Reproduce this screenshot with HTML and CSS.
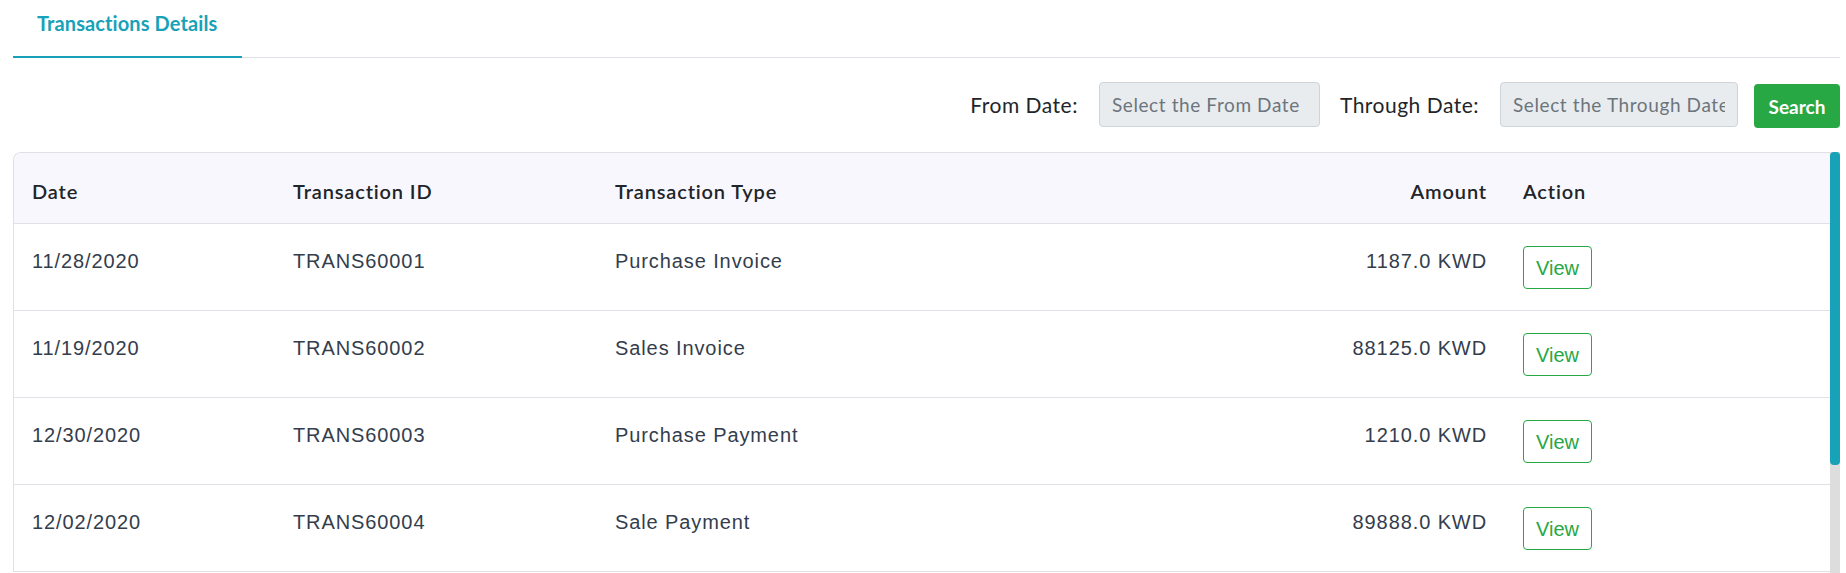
FILE: index.html
```html
<!DOCTYPE html>
<html lang="en">
<head>
<meta charset="utf-8">
<title>Transactions Details</title>
<link rel="stylesheet" href="styles.css">
</head>
<body>
<div class="page">
  <nav class="tabs">
    <a class="tab tab-active" href="#">Transactions Details</a>
  </nav>

  <form class="filters">
    <label class="filter-label" for="from-date">From Date:</label>
    <input class="filter-input filter-from" id="from-date" type="text" placeholder="Select the From Date">
    <label class="filter-label" for="through-date">Through Date:</label>
    <input class="filter-input filter-through" id="through-date" type="text" placeholder="Select the Through Date">
    <button class="btn-search" type="button">Search</button>
  </form>

  <div class="table-card">
    <div class="table-scroll">
      <table class="tx-table">
        <colgroup>
          <col class="col-date">
          <col class="col-id">
          <col class="col-type">
          <col class="col-amount">
          <col class="col-action">
        </colgroup>
        <thead>
          <tr>
            <th>Date</th>
            <th>Transaction ID</th>
            <th>Transaction Type</th>
            <th class="num">Amount</th>
            <th>Action</th>
          </tr>
        </thead>
        <tbody>
          <tr>
            <td>11/28/2020</td>
            <td>TRANS60001</td>
            <td>Purchase Invoice</td>
            <td class="num">1187.0 KWD</td>
            <td><button class="btn-view" type="button">View</button></td>
          </tr>
          <tr>
            <td>11/19/2020</td>
            <td>TRANS60002</td>
            <td>Sales Invoice</td>
            <td class="num">88125.0 KWD</td>
            <td><button class="btn-view" type="button">View</button></td>
          </tr>
          <tr>
            <td>12/30/2020</td>
            <td>TRANS60003</td>
            <td>Purchase Payment</td>
            <td class="num">1210.0 KWD</td>
            <td><button class="btn-view" type="button">View</button></td>
          </tr>
          <tr>
            <td>12/02/2020</td>
            <td>TRANS60004</td>
            <td>Sale Payment</td>
            <td class="num">89888.0 KWD</td>
            <td><button class="btn-view" type="button">View</button></td>
          </tr>
        </tbody>
      </table>
    </div>
    <div class="scrollbar">
      <div class="scrollbar-thumb"></div>
    </div>
  </div>
</div>
</body>
</html>
```

FILE: styles.css
```css
html, body {
  margin: 0;
  padding: 0;
  overflow: hidden;
  background: #ffffff;
}

body {
  font-family: Lato, "Open Sans", sans-serif;
  color: #212529;
}

.page {
  padding: 0 6px 0 13px;
}

/* Tab strip */
.tabs {
  display: flex;
  height: 57px;
  border-bottom: 1px solid #dee2e6;
}

.tab {
  display: block;
  box-sizing: border-box;
  height: 58px;
  padding: 11px 25px 0 24px;
  margin-bottom: -1px;
  font-size: 20px;
  line-height: 24px;
  letter-spacing: 0.1px;
  font-weight: 700;
  color: #17a2b8;
  text-decoration: none;
}

.tab-active {
  border-bottom: 2px solid #17a2b8;
}

/* Date filter row */
.filters {
  display: flex;
  justify-content: flex-end;
  align-items: center;
  margin: 24px 0 0;
  height: 45px;
}

.filter-label {
  font-size: 21px;
  letter-spacing: 0.5px;
  color: #212529;
  margin-right: 21px;
}

.filter-input {
  box-sizing: border-box;
  height: 45px;
  padding: 0 12px;
  border: 1px solid #ced4da;
  border-radius: 4px;
  background: #e9ecef;
  font-family: Lato, sans-serif;
  font-size: 19px;
  letter-spacing: 0.6px;
  color: #495057;
  margin-right: 20px;
}

.filter-input::placeholder {
  color: #6c757d;
}

.filter-from {
  width: 221px;
}

.filter-through {
  width: 238px;
  margin-right: 16px;
}

.btn-search {
  box-sizing: border-box;
  height: 44px;
  width: 86px;
  margin-top: 3px;
  border: none;
  border-radius: 4px;
  background: #28a745;
  color: #ffffff;
  font-family: Lato, sans-serif;
  font-size: 19px;
  font-weight: 700;
}

/* Transactions table with its scroll track */
.table-card {
  display: flex;
  margin-top: 25px;
  height: 421px;
}

.table-scroll {
  flex: 1;
  min-width: 0;
  overflow: hidden;
}

.scrollbar {
  width: 10px;
  background: #dddddd;
}

.scrollbar-thumb {
  height: 313px;
  background: #17a2b8;
  border-radius: 4px;
}

.tx-table {
  width: 100%;
  table-layout: fixed;
  border-collapse: separate;
  border-spacing: 0;
  border-top: 1px solid #dee2e6;
  border-left: 1px solid #dee2e6;
  border-top-left-radius: 8px;
}

.col-date { width: 261px; }
.col-id { width: 322px; }
.col-type { width: 560px; }
.col-amount { width: 348px; }

.tx-table th {
  height: 71px;
  box-sizing: border-box;
  padding: 5px 18px 0;
  background: #f8f7fe;
  border-bottom: 1px solid #dee2e6;
  text-align: left;
  font-size: 20px;
  letter-spacing: 0.85px;
  font-weight: 600;
  color: #212529;
}

.tx-table th:first-child {
  border-top-left-radius: 8px;
}

.tx-table td {
  padding: 22px 18px 21px;
  vertical-align: top;
  border-bottom: 1px solid #dee2e6;
  font-family: "Liberation Sans", Arial, sans-serif;
  font-size: 20px;
  line-height: 30px;
  letter-spacing: 0.9px;
  color: #343d4c;
}

.tx-table .num {
  text-align: right;
}

.btn-view {
  box-sizing: border-box;
  height: 43px;
  padding: 0 12px;
  border: 1px solid #28a745;
  border-radius: 4px;
  background: #ffffff;
  color: #28a745;
  font-family: "Liberation Sans", Arial, sans-serif;
  font-size: 20px;
  line-height: 30px;
}
```
